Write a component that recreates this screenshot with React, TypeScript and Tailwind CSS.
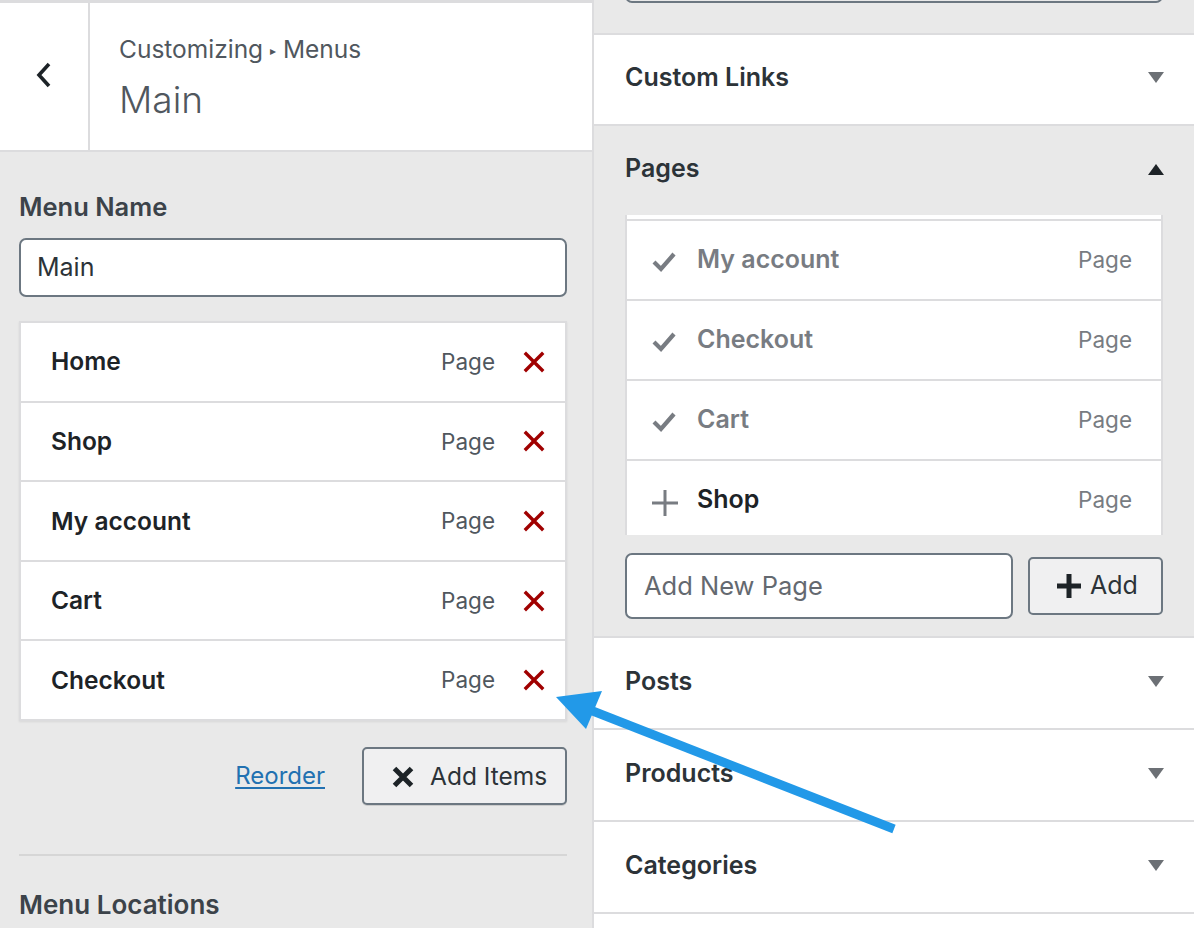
import React from 'react';

const font = { fontFamily: 'Inter, "Noto Sans", sans-serif' };

const menuItems = ['Home', 'Shop', 'My account', 'Cart', 'Checkout'];

const pageRows = [
  { title: 'My account', added: true },
  { title: 'Checkout', added: true },
  { title: 'Cart', added: true },
  { title: 'Shop', added: false },
];

const RedX = () => (
  <svg width="22" height="22" viewBox="0 0 22 22">
    <path d="M3 3 L19 19 M19 3 L3 19" stroke="#a00000" strokeWidth="3.4" strokeLinecap="square" />
  </svg>
);

const Caret = ({ up, color }: { up?: boolean; color: string }) => (
  <svg width="16" height="13" viewBox="0 0 16 13">
    {up ? <polygon points="0,12 8,1 16,12" fill={color} /> : <polygon points="0,1 16,1 8,12" fill={color} />}
  </svg>
);

const Section = ({ title }: { title: string }) => (
  <div className="h-[92px] bg-white border-b-2 border-[#dcdcde] flex items-center justify-between pl-[31px] pr-[30px] pb-[3px]">
    <span className="text-[25px] font-semibold text-[#2c3338]">{title}</span>
    <Caret color="#6c7075" />
  </div>
);

const App = () => {
  return (
    <div className="relative w-[1194px] h-[928px] overflow-hidden flex bg-[#e9e9e9]" style={font}>
      {/* left panel */}
      <div className="w-[594px] h-full border-r-2 border-[#dcdcde] flex flex-col">
        <div className="h-[152px] bg-white border-t-[3px] border-b-2 border-[#dcdcde] flex">
          <div className="w-[90px] border-r-2 border-[#dcdcde] flex items-center justify-center pb-[4px]">
            <svg width="18" height="28" viewBox="0 0 18 28">
              <path d="M14 3 L4 14 L14 25" fill="none" stroke="#1d2327" strokeWidth="3.6" />
            </svg>
          </div>
          <div className="pl-[29px] pt-[28px] flex flex-col">
            <div className="text-[24.5px] leading-[36px] text-[#50575e]">
              Customizing <span className="text-[12px] align-[3px]">▸</span> Menus
            </div>
            <div className="text-[37px] leading-[46px] font-light text-[#50575e] mt-[8px]">Main</div>
          </div>
        </div>

        <div className="px-[19px] pr-[25px] flex flex-col">
          <div className="mt-[40px] text-[25.5px] leading-[30px] font-semibold text-[#3c434a]">Menu Name</div>
          <div className="mt-[16px] h-[59px] bg-white border-2 border-[#6c7781] rounded-[7px] flex items-center px-[16px] text-[25px] text-[#2c3338]">
            Main
          </div>

          <div className="mt-[24px] bg-white border-t-2 border-x-2 border-[#dcdcde] shadow-[0_1px_2px_rgba(0,0,0,0.08)]">
            {menuItems.map((item) => (
              <div key={item} className="h-[79.6px] border-b-2 border-[#dcdcde] flex items-center pl-[30px] pr-[20px]">
                <span className="flex-1 text-[24.5px] font-semibold text-[#1d2327]">{item}</span>
                <span className="text-[22.5px] text-[#50575e] mr-[28px]">Page</span>
                <RedX />
              </div>
            ))}
          </div>

          <div className="mt-[26px] flex items-center justify-end">
            <a className="text-[24px] text-[#2271b1] underline underline-offset-[3px] mr-[37px]">Reorder</a>
            <div className="w-[205px] h-[58px] bg-[#f0f0f1] border-2 border-[#6c7781] rounded-[5px] flex items-center pl-[28px] shadow-[0_1px_0_#ccc]">
              <svg width="22" height="22" viewBox="0 0 22 22" className="mt-[2px]">
                <path d="M2.5 2.5 L19.5 19.5 M19.5 2.5 L2.5 19.5" stroke="#1d2327" strokeWidth="5" />
              </svg>
              <span className="ml-[16px] text-[24.5px] text-[#2c3338]">Add Items</span>
            </div>
          </div>

          <div className="mt-[49px] h-[2px] bg-[#d6d6d6]" />
          <div className="mt-[34px] text-[26px] leading-[30px] font-semibold text-[#3c434a]">Menu Locations</div>
        </div>
      </div>

      {/* right panel */}
      <div className="flex-1 h-full flex flex-col">
        <div className="h-[35px] border-b-2 border-[#dcdcde] px-[31px] overflow-hidden">
          <div className="h-[40px] -mt-[37px] border-2 border-[#6c7781] rounded-[7px] bg-[#e9e9e9]" />
        </div>
        <div className="h-[91px] bg-white border-b-2 border-[#dcdcde] flex items-center justify-between pl-[31px] pr-[30px] pb-[4px]">
          <span className="text-[25px] font-semibold text-[#2c3338]">Custom Links</span>
          <Caret color="#6c7075" />
        </div>

        <div className="border-b-2 border-[#dcdcde] pb-[17px]">
          <div className="h-[89px] flex items-center justify-between pl-[31px] pr-[30px] pb-[3px]">
            <span className="text-[25px] font-semibold text-[#2c3338]">Pages</span>
            <Caret up color="#1d2327" />
          </div>
          <div className="mx-[31px] h-[320px] overflow-hidden bg-white border-x-2 border-[#dcdcde]">
            <div className="-mt-[74px]">
              <div className="h-[80px] border-b-2 border-[#dcdcde]" />
              {pageRows.map((row) => (
                <div key={row.title} className="h-[80px] border-b-2 border-[#dcdcde] flex items-center pl-[24px] pr-[29px]">
                  <div className="w-[46px] flex items-center">
                    {row.added ? (
                      <svg width="26" height="22" viewBox="0 0 26 22" className="mt-[4px]">
                        <path d="M3 11 L10 18 L23 3" fill="none" stroke="#787c82" strokeWidth="4.2" />
                      </svg>
                    ) : (
                      <svg width="28" height="28" viewBox="0 0 28 28" className="mt-[5px]">
                        <path d="M14 1 V27 M1 14 H27" stroke="#787c82" strokeWidth="3" />
                      </svg>
                    )}
                  </div>
                  <span
                    className={`flex-1 text-[25px] font-semibold ${row.added ? 'text-[#787c82]' : 'text-[#1d2327]'}`}
                  >
                    {row.title}
                  </span>
                  <span className="text-[22.5px] text-[#787c82]">Page</span>
                </div>
              ))}
            </div>
          </div>
          <div className="mt-[18px] mx-[31px] flex items-center">
            <div className="w-[388px] h-[66px] bg-white border-2 border-[#6c7781] rounded-[7px] flex items-center px-[17px] text-[25.5px] text-[#646970]">
              Add New Page
            </div>
            <div className="ml-[15px] flex-1 h-[58px] bg-[#f0f0f1] border-2 border-[#6c7781] rounded-[5px] flex items-center pl-[26px]">
              <svg width="26" height="26" viewBox="0 0 26 26">
                <path d="M13 1 V25 M1 13 H25" stroke="#1d2327" strokeWidth="5" />
              </svg>
              <span className="ml-[8px] text-[25px] text-[#2c3338]">Add</span>
            </div>
          </div>
        </div>

        <Section title="Posts" />
        <Section title="Products" />
        <Section title="Categories" />
        <div className="flex-1 bg-white" />
      </div>

      {/* annotation arrow */}
      <svg className="absolute left-0 top-0 pointer-events-none" width="1194" height="928">
        <line x1="894" y1="829" x2="585" y2="708" stroke="#2299e8" strokeWidth="9" />
        <polygon points="556,697 602,691 586,729" fill="#2299e8" />
      </svg>
    </div>
  );
};

export default App;
